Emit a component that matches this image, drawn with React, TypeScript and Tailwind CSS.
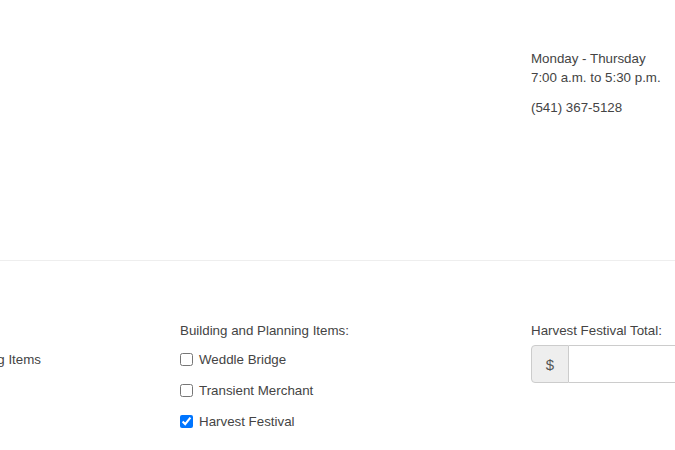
import React from 'react';

const items = [
  { label: 'Weddle Bridge', checked: false },
  { label: 'Transient Merchant', checked: false },
  { label: 'Harvest Festival', checked: true },
];

const App = () => {
  return (
    <div className="w-[675px] h-[450px] overflow-hidden bg-white text-[13.33px] leading-[19px] text-[#444] font-['Liberation_Sans',Arial,sans-serif]">
      {/* Office hours */}
      <div className="h-[260px] grid grid-cols-[180px_351px_1fr] pt-[49px]">
        <div />
        <div />
        <div>
          <p>
            Monday - Thursday
            <br />
            7:00 a.m. to 5:30 p.m.
          </p>
          <p className="mt-[11px]">(541) 367-5128</p>
        </div>
      </div>

      {/* Items form */}
      <div className="border-t border-[#eee] grid grid-cols-[180px_351px_1fr] pt-[60px]">
        <div className="pt-[29px]">
          <div className="w-[41px] flex justify-end whitespace-nowrap">
            <label className="flex items-center gap-[6px]">
              <input type="checkbox" className="w-[13px] h-[13px]" readOnly />
              Engineering Items
            </label>
          </div>
        </div>

        <div>
          <div>Building and Planning Items:</div>
          <div className="mt-[10px] flex flex-col gap-[12px]">
            {items.map((item) => (
              <label key={item.label} className="flex items-center gap-[6px]">
                <input
                  type="checkbox"
                  className="w-[13px] h-[13px] shrink-0"
                  defaultChecked={item.checked}
                />
                {item.label}
              </label>
            ))}
          </div>
        </div>

        <div>
          <div>Harvest Festival Total:</div>
          <div className="mt-[5px] flex h-[38px] w-[220px]">
            <span className="w-[38px] shrink-0 flex items-center justify-center bg-[#eee] border border-[#ccc] rounded-l-[4px] text-[#555] text-[15px]">
              $
            </span>
            <input
              type="text"
              className="flex-1 min-w-0 border border-l-0 border-[#ccc] rounded-r-[4px] outline-none px-3"
            />
          </div>
        </div>
      </div>
    </div>
  );
};

export default App;
